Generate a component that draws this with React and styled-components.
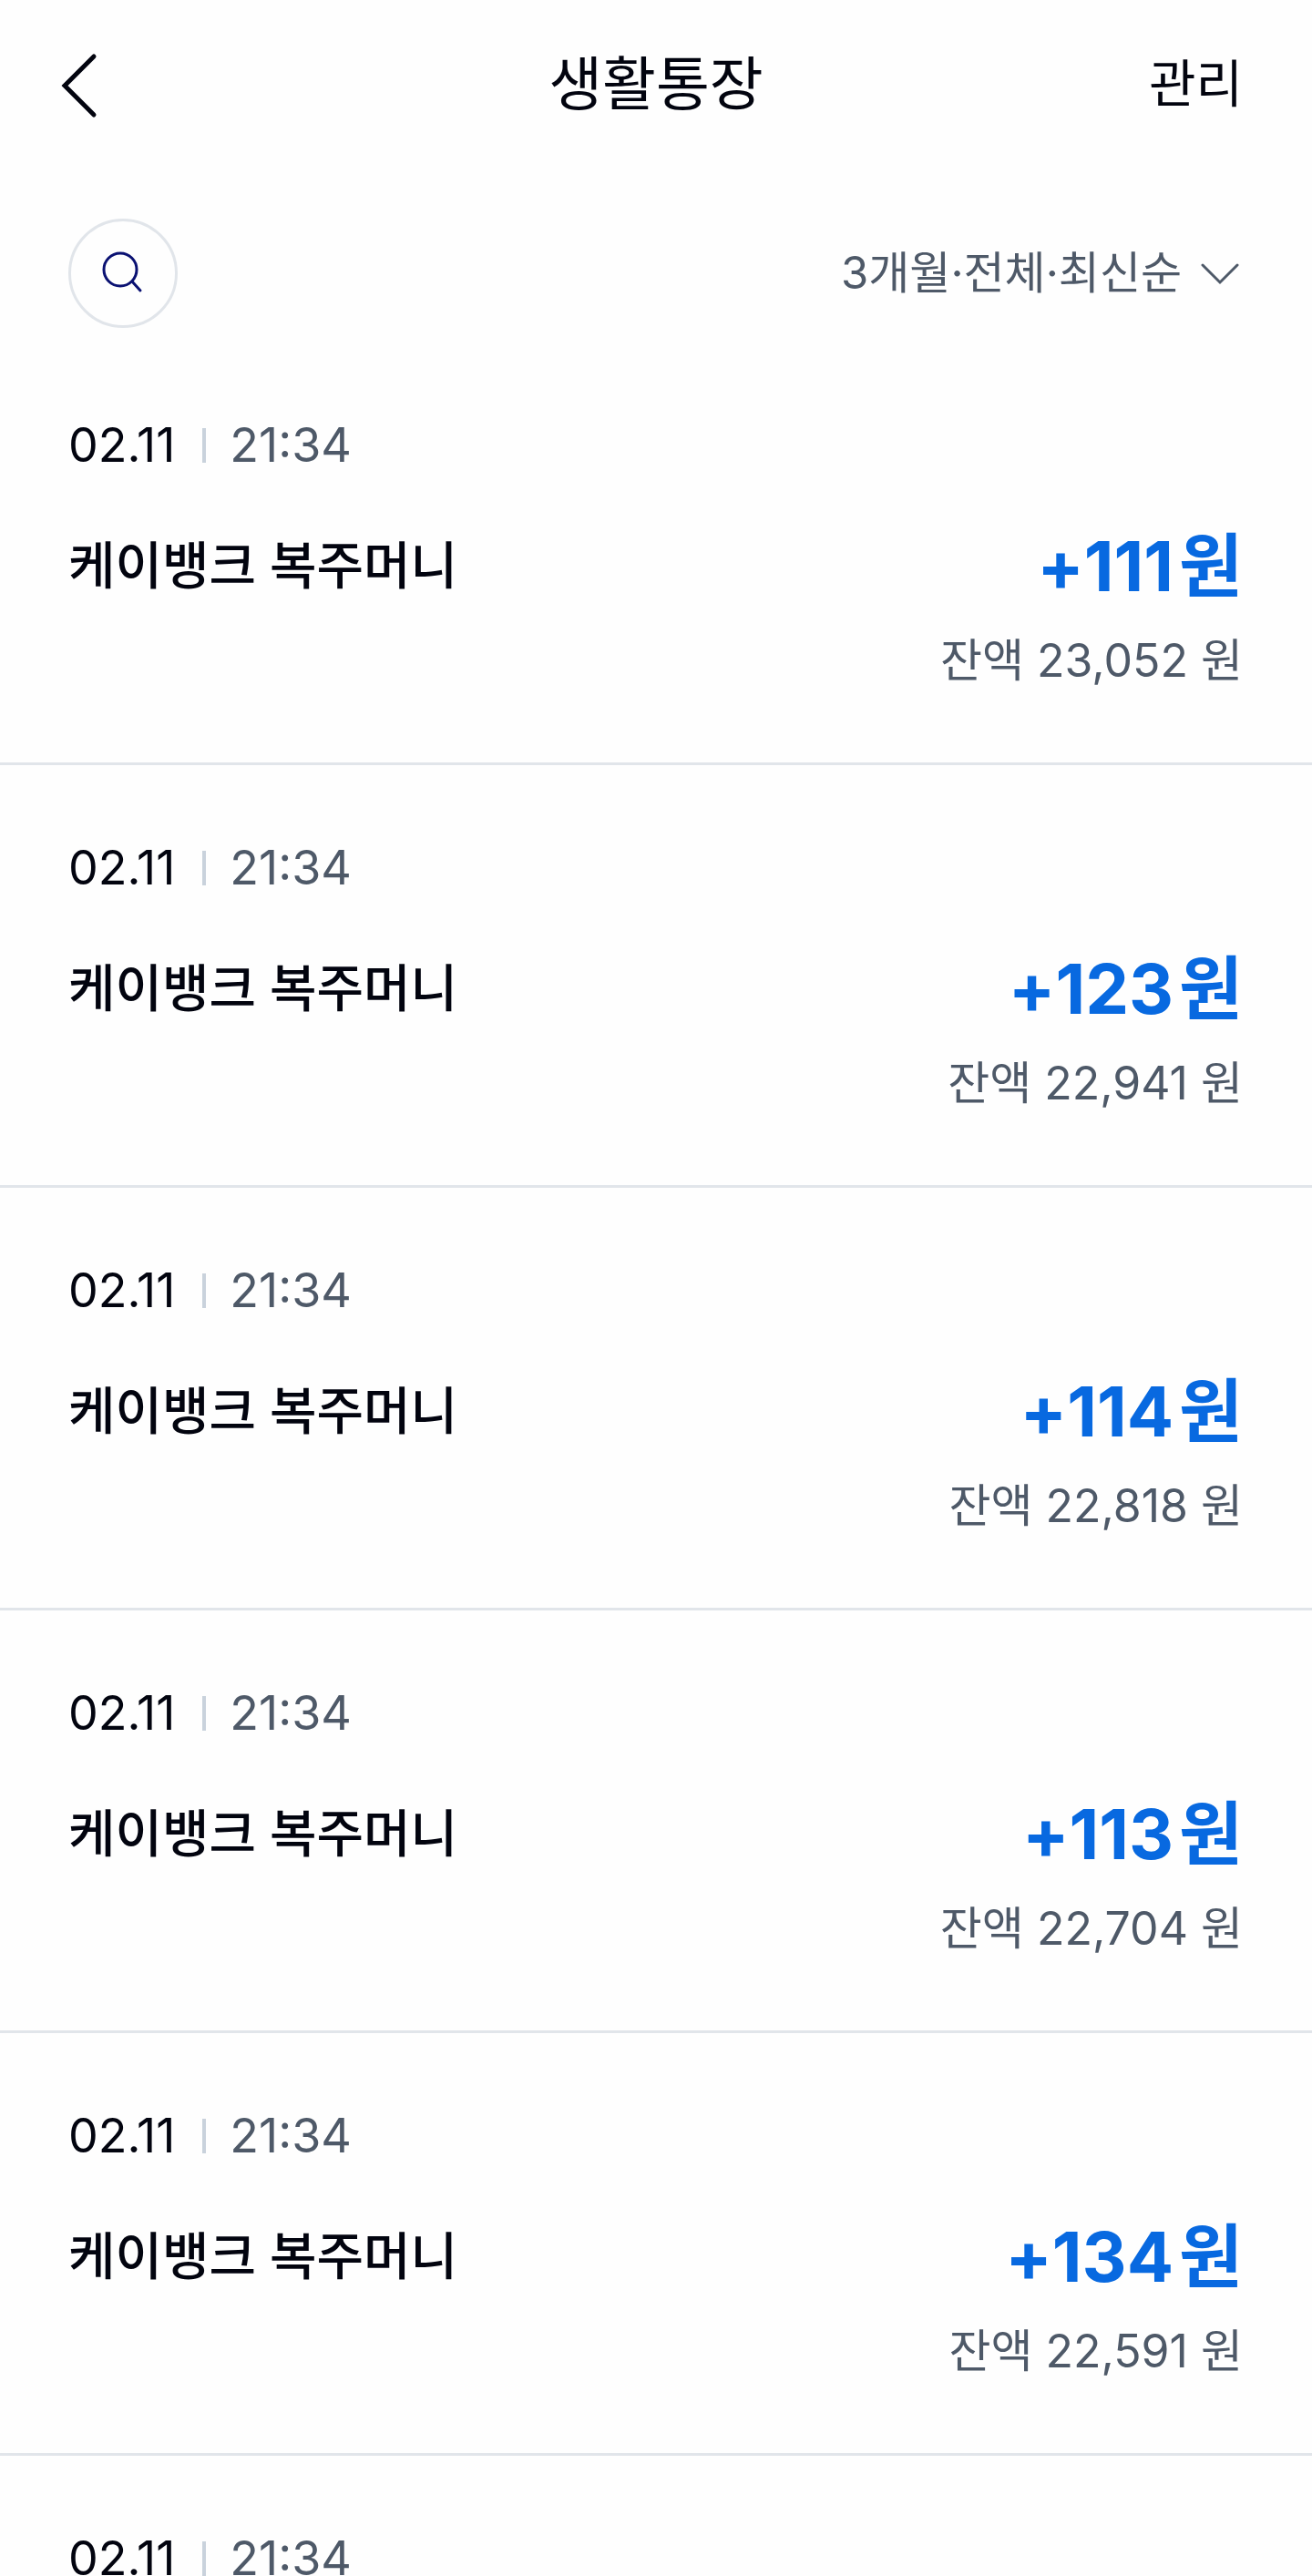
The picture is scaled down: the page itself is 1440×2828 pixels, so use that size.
import React from "react";
import styled, { createGlobalStyle } from "styled-components";

const transactions = [
  { id: 1, date: "02.11", time: "21:34", title: "케이뱅크 복주머니", amount: "+111", balance: "23,052" },
  { id: 2, date: "02.11", time: "21:34", title: "케이뱅크 복주머니", amount: "+123", balance: "22,941" },
  { id: 3, date: "02.11", time: "21:34", title: "케이뱅크 복주머니", amount: "+114", balance: "22,818" },
  { id: 4, date: "02.11", time: "21:34", title: "케이뱅크 복주머니", amount: "+113", balance: "22,704" },
  { id: 5, date: "02.11", time: "21:34", title: "케이뱅크 복주머니", amount: "+134", balance: "22,591" },
  { id: 6, date: "02.11", time: "21:34" },
];

const TransactionItem = ({ date, time, title, amount, balance }) => {
  return (
    <Item>
      <DateRow>
        <DateText>{date}</DateText>
        <Divider />
        <TimeText>{time}</TimeText>
      </DateRow>
      {title && (
        <Detail>
          <ItemTitle>{title}</ItemTitle>
          <AmountBox>
            <Amount>
              {amount}
              <Unit>원</Unit>
            </Amount>
            <Balance>잔액 {balance} 원</Balance>
          </AmountBox>
        </Detail>
      )}
    </Item>
  );
};

const App = () => {
  return (
    <Page>
      <GlobalStyle />
      <Header>
        <BackButton aria-label="뒤로">
          <svg width="44" height="76" viewBox="0 0 44 76" fill="none">
            <path d="M39 6L7 38L39 70" stroke="#02040f" strokeWidth="5" strokeLinecap="round" />
          </svg>
        </BackButton>
        <PageTitle>생활통장</PageTitle>
        <ManageButton>관리</ManageButton>
      </Header>
      <Toolbar>
        <SearchButton aria-label="검색">
          <svg width="48" height="48" viewBox="0 0 48 48" fill="none" stroke="#0a1172" strokeWidth="3">
            <circle cx="21" cy="20" r="18" />
            <path d="M34 33L43 43" strokeLinecap="round" />
          </svg>
        </SearchButton>
        <Filter>
          <FilterSelect aria-label="조회 조건" defaultValue="recent">
            <option value="recent">3개월·전체·최신순</option>
          </FilterSelect>
          <svg width="42" height="26" viewBox="0 0 42 26" fill="none">
            <path d="M2 4L21 23L40 4" stroke="#4e5968" strokeWidth="3" strokeLinecap="round" />
          </svg>
        </Filter>
      </Toolbar>
      <List>
        {transactions.map((item) => (
          <TransactionItem key={item.id} {...item} />
        ))}
      </List>
    </Page>
  );
};

export default App;

const GlobalStyle = createGlobalStyle`
  * {
    box-sizing: border-box;
  }
  body {
    margin: 0;
    background-color: #fefefe;
    color: #02040f;
    font-family: Inter, "Noto Sans CJK KR", sans-serif;
  }
  button, select {
    margin: 0;
    padding: 0;
    border: none;
    background: none;
    color: inherit;
    font: inherit;
    cursor: pointer;
  }
  svg {
    display: block;
  }
`;
const Page = styled.div`
  height: 100vh;
  display: flex;
  flex-direction: column;
  overflow: hidden;
`;
const Header = styled.header`
  flex: none;
  height: 188px;
  padding: 0 64px;
  display: grid;
  grid-template-columns: 1fr auto 1fr;
  align-items: center;
`;
const BackButton = styled.button`
  justify-self: start;
`;
const PageTitle = styled.h1`
  margin: 0;
  padding-bottom: 4px;
  font-size: 64px;
  font-weight: 400;
  line-height: 80px;
`;
const ManageButton = styled.button`
  justify-self: end;
  && {
    padding: 0 12px 4px 0;
    font-size: 56px;
    line-height: 80px;
  }
`;
const Toolbar = styled.div`
  flex: none;
  padding: 52px 80px 16px 75px;
  display: flex;
  align-items: center;
  justify-content: space-between;
`;
const SearchButton = styled.button`
  width: 120px;
  height: 120px;
  display: flex;
  align-items: center;
  justify-content: center;
  && {
    border: 3px solid #e1e5ea;
    border-radius: 50%;
  }
`;
const Filter = styled.div`
  display: flex;
  align-items: center;
  gap: 20px;
`;
const FilterSelect = styled.select`
  && {
    appearance: none;
    color: #4e5968;
    font-size: 49px;
    line-height: 72px;
  }
`;
const List = styled.ul`
  flex: 1;
  min-height: 0;
  margin: 0;
  padding: 0;
  list-style: none;
  overflow-y: auto;
  scrollbar-width: none;
`;
const Item = styled.li`
  height: 464px;
  padding: 81px 76px 0 75px;
  border-bottom: 3px solid #e1e5ea;
`;
const DateRow = styled.div`
  display: flex;
  align-items: center;
  font-size: 52px;
  line-height: 64px;
`;
const DateText = styled.span``;
const Divider = styled.span`
  width: 4px;
  height: 38px;
  margin: 0 26px 0 30px;
  background-color: #c9d2dc;
`;
const TimeText = styled.span`
  color: #4e5968;
`;
const Detail = styled.div`
  margin-top: 56px;
  display: flex;
  justify-content: space-between;
  align-items: flex-start;
`;
const ItemTitle = styled.h2`
  margin: 0;
  font-size: 56px;
  font-weight: 500;
  line-height: 88px;
`;
const AmountBox = styled.div`
  text-align: right;
`;
const Amount = styled.p`
  margin: 0;
  color: #0869e0;
  font-size: 76px;
  font-weight: 700;
  font-kerning: none;
  line-height: 88px;
`;
const Unit = styled.span`
  margin-left: 6px;
`;
const Balance = styled.p`
  margin: 24px 0 0;
  color: #4e5968;
  font-size: 50px;
  line-height: 72px;
`;
